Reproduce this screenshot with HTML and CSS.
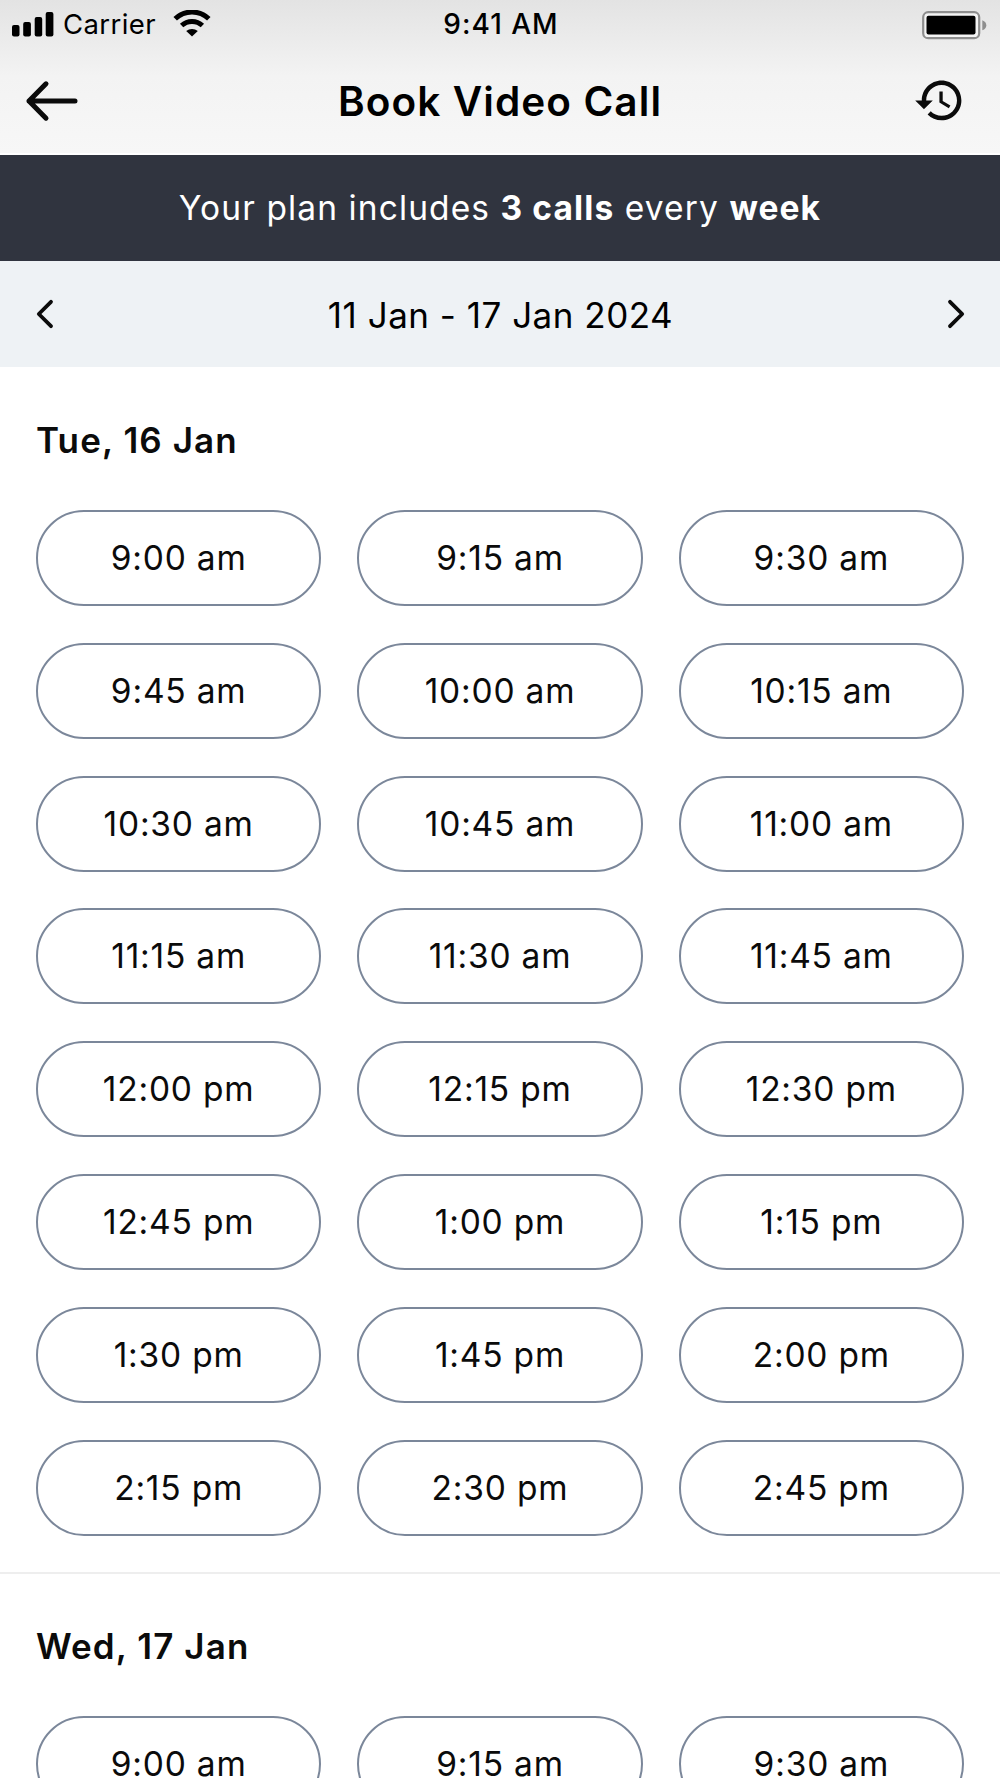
FILE: index.html
```html
<!DOCTYPE html>
<html lang="en">
<head>
    <meta charset="UTF-8">
    <meta name="viewport" content="width=device-width, initial-scale=1.0">
    <title>Book Video Call</title>
    <link rel="stylesheet" href="styles.css">
</head>
<body>
    <header class="header">
        <div class="status-bar">
            <div class="status-left">
                <svg class="signal" width="42" height="25" viewBox="0 0 42 25">
                    <rect x="0" y="13" width="7.5" height="11.5" rx="2"/>
                    <rect x="11.2" y="10" width="7.7" height="14.5" rx="2"/>
                    <rect x="22.7" y="5" width="7.5" height="19.5" rx="2"/>
                    <rect x="33.7" y="0" width="7.7" height="24.5" rx="2"/>
                </svg>
                <span class="carrier">Carrier</span>
                <svg class="wifi" width="38" height="27" viewBox="0 0 38 27">
                    <path d="M2.2 8.8a24.2 24.2 0 0 1 33.6 0" fill="none" stroke="#000" stroke-width="5"/>
                    <path d="M8.6 15.6a15.2 15.2 0 0 1 20.8 0" fill="none" stroke="#000" stroke-width="4.8"/>
                    <path d="M13.2 21a9.5 9.5 0 0 1 11.6 0L19 26.6z"/>
                </svg>
            </div>
            <span class="time">9:41 AM</span>
            <svg class="battery" width="66" height="30" viewBox="0 0 66 30">
                <rect x="1.2" y="1.2" width="56" height="26" rx="5" fill="#f4f4f4" stroke="#8e8e8e" stroke-width="2.2"/>
                <rect x="4.5" y="4.7" width="49" height="18.8" rx="2"/>
                <path d="M60.3 9.2q4 1.5 4 5t-4 5z" fill="#8e8e8e"/>
            </svg>
        </div>
        <div class="nav-bar">
            <button type="button" class="icon-btn back">
                <svg width="54" height="44" viewBox="0 0 54 44">
                    <path d="M51 22H5M22 4.8L5 22l17 17.2" fill="none" stroke="#0b0b0b" stroke-width="5" stroke-linecap="round" stroke-linejoin="round"/>
                </svg>
            </button>
            <h1 class="title">Book Video Call</h1>
            <button type="button" class="icon-btn history">
                <svg width="52.8" height="52.8" viewBox="0 0 24 24">
                    <path fill="#0b0b0b" d="M13 3c-4.97 0-9 4.03-9 9H1l3.89 3.89.07.14L9 12H6c0-3.87 3.13-7 7-7s7 3.13 7 7-3.13 7-7 7c-1.93 0-3.68-.79-4.94-2.06l-1.42 1.42C8.27 19.99 10.51 21 13 21c4.97 0 9-4.03 9-9s-4.03-9-9-9zm-1 5v5l4.28 2.54.72-1.21-3.5-2.08V8H12z"/>
                </svg>
            </button>
        </div>
    </header>

    <div class="plan">
        <p class="plan-text">Your plan includes <b>3 calls</b> every <b>week</b></p>
    </div>

    <div class="week">
        <button type="button" class="icon-btn">
            <svg width="18" height="30" viewBox="0 0 18 30">
                <path d="M15 2.8L2.8 15 15 27.2" fill="none" stroke="#0b0b0b" stroke-width="3.8" stroke-linecap="round" stroke-linejoin="round"/>
            </svg>
        </button>
        <span class="week-range">11 Jan - 17 Jan 2024</span>
        <button type="button" class="icon-btn">
            <svg width="18" height="30" viewBox="0 0 18 30">
                <path d="M3 2.8L15.2 15 3 27.2" fill="none" stroke="#0b0b0b" stroke-width="3.8" stroke-linecap="round" stroke-linejoin="round"/>
            </svg>
        </button>
    </div>

    <section class="day">
        <h2 class="day-title">Tue, 16 Jan</h2>
        <div class="slots">
            <button type="button" class="slot">9:00 am</button>
            <button type="button" class="slot">9:15 am</button>
            <button type="button" class="slot">9:30 am</button>
            <button type="button" class="slot">9:45 am</button>
            <button type="button" class="slot">10:00 am</button>
            <button type="button" class="slot">10:15 am</button>
            <button type="button" class="slot">10:30 am</button>
            <button type="button" class="slot">10:45 am</button>
            <button type="button" class="slot">11:00 am</button>
            <button type="button" class="slot">11:15 am</button>
            <button type="button" class="slot">11:30 am</button>
            <button type="button" class="slot">11:45 am</button>
            <button type="button" class="slot">12:00 pm</button>
            <button type="button" class="slot">12:15 pm</button>
            <button type="button" class="slot">12:30 pm</button>
            <button type="button" class="slot">12:45 pm</button>
            <button type="button" class="slot">1:00 pm</button>
            <button type="button" class="slot">1:15 pm</button>
            <button type="button" class="slot">1:30 pm</button>
            <button type="button" class="slot">1:45 pm</button>
            <button type="button" class="slot">2:00 pm</button>
            <button type="button" class="slot">2:15 pm</button>
            <button type="button" class="slot">2:30 pm</button>
            <button type="button" class="slot">2:45 pm</button>
        </div>
    </section>

    <section class="day">
        <h2 class="day-title">Wed, 17 Jan</h2>
        <div class="slots">
            <button type="button" class="slot">9:00 am</button>
            <button type="button" class="slot">9:15 am</button>
            <button type="button" class="slot">9:30 am</button>
        </div>
    </section>
</body>
</html>
```
FILE: styles.css
```css
* {
    box-sizing: border-box;
}
body {
    font-family: Inter, "Liberation Sans", sans-serif;
    background-color: #fff;
    color: #0b0b0b;
    margin: 0;
    height: 1778px;
    overflow: hidden;
}
svg {
    display: block;
}
.header {
    height: 155px;
    background: linear-gradient(#e3e3e3, #f3f3f3 50%, #f7f7f7);
    border-bottom: 2px solid #fff;
    color: #000;
}
.status-bar {
    display: grid;
    grid-template-columns: 1fr auto 1fr;
    align-items: center;
    height: 48px;
    padding: 0 12px;
}
.status-left {
    display: flex;
    align-items: center;
}
.carrier {
    font-size: 27.5px;
    margin: 0 17px 0 9px;
    letter-spacing: 0.4px;
}
.wifi {
    margin-top: -2px;
}
.time {
    font-size: 28px;
    font-weight: 500;
    letter-spacing: 1px;
    margin-left: 2px;
}
.battery {
    justify-self: end;
    margin-top: 3px;
}
.nav-bar {
    display: grid;
    grid-template-columns: 1fr auto 1fr;
    align-items: center;
    height: 105px;
    padding: 0 24px;
}
.icon-btn {
    background: none;
    border: none;
    padding: 0;
    cursor: pointer;
}
.history {
    justify-self: end;
    margin-right: 10px;
}
.title {
    font-size: 40.5px;
    font-weight: 600;
    letter-spacing: 1.1px;
    margin: 2px 0 0;
}
.plan {
    display: flex;
    align-items: center;
    justify-content: center;
    height: 106px;
    background-color: #30343f;
    color: #fff;
}
.plan-text {
    font-size: 33.5px;
    letter-spacing: 1.1px;
    margin: 0;
}
.week {
    display: flex;
    align-items: center;
    justify-content: space-between;
    height: 106px;
    padding: 0 35px 0 36px;
    background-color: #eef2f5;
    color: #000;
}
.week-range {
    font-size: 35px;
    letter-spacing: 0.5px;
    padding-top: 1px;
}
.day {
    padding: 0 36px 35.5px;
    border-bottom: 2px solid #eee;
}
.day-title {
    font-size: 35px;
    font-weight: 600;
    line-height: 42px;
    letter-spacing: 1.1px;
    margin: 0;
    padding: 51.5px 0 49.3px;
}
.slots {
    display: grid;
    grid-template-columns: repeat(3, 1fr);
    gap: 36.9px 36px;
}
.slot {
    height: 96px;
    font-family: inherit;
    font-size: 33.5px;
    color: #0b0b0b;
    letter-spacing: 0.8px;
    background-color: #fff;
    border: 2px solid #7b879a;
    border-radius: 48px;
    cursor: pointer;
}
```
